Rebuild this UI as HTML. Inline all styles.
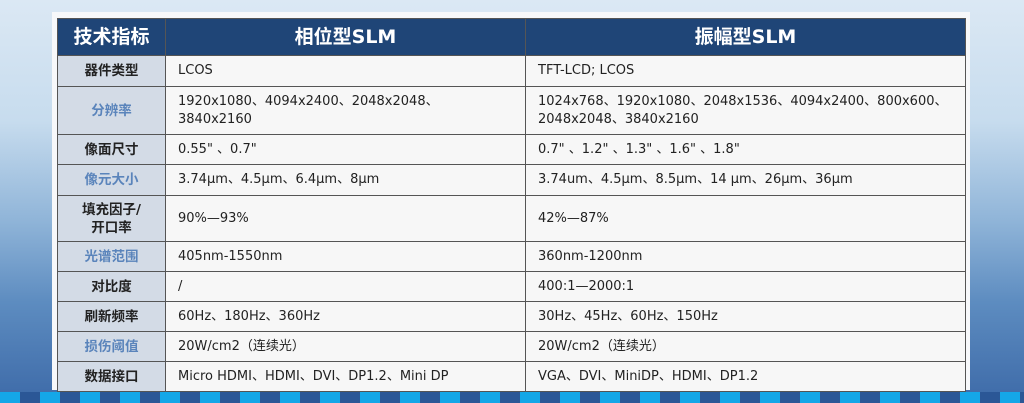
<!DOCTYPE html>
<html><head><meta charset="utf-8"><style>
body{margin:0;width:1024px;height:403px;overflow:hidden;position:relative;font-family:"Liberation Sans","Noto Sans CJK SC",sans-serif;
background:linear-gradient(180deg,#dbe8f4 0%,#c7dcee 30%,#8fb4d8 55%,#5d8cc0 75%,#3d6aa8 100%);}
.frame{position:absolute;left:52px;top:12px;width:918px;height:378px;background:#f7f8fa;}
table{position:absolute;left:57px;top:18px;border-collapse:collapse;table-layout:fixed;width:908px;}
td,th{border:1px solid #555;padding:0 0 0 12px;font-size:13px;color:#222;line-height:18px;background:#f7f7f7;font-family:"DejaVu Sans","Noto Sans CJK SC",sans-serif;}
th{background:#1f4577;color:#fff;font-size:19px;font-weight:bold;height:36px;text-align:center;padding:0;}
td.l{background:#d3dbe6;text-align:center;padding:0;font-weight:bold;font-size:13.5px;}
td.b{color:#5a84bb;}
.band{position:absolute;left:0;top:392px;width:1024px;height:11px;background:repeating-linear-gradient(90deg,#14a7e8 0 20px,#2b5796 20px 40px);}
</style></head><body>
<div class="frame"></div>
<table>
<col style="width:108px"><col style="width:360px"><col style="width:440px">
<tr><th>技术指标</th><th>相位型SLM</th><th>振幅型SLM</th></tr>
<tr style="height:31px"><td class="l">器件类型</td><td>LCOS</td><td>TFT-LCD; LCOS</td></tr>
<tr style="height:48px"><td class="l b">分辨率</td><td>1920x1080、4094x2400、2048x2048、<br>3840x2160</td><td>1024x768、1920x1080、2048x1536、4094x2400、800x600、<br>2048x2048、3840x2160</td></tr>
<tr style="height:30px"><td class="l">像面尺寸</td><td>0.55" 、0.7"</td><td>0.7" 、1.2" 、1.3" 、1.6" 、1.8"</td></tr>
<tr style="height:31px"><td class="l b">像元大小</td><td>3.74μm、4.5μm、6.4μm、8μm</td><td>3.74um、4.5μm、8.5μm、14 μm、26μm、36μm</td></tr>
<tr style="height:46px"><td class="l">填充因子/<br>开口率</td><td>90%—93%</td><td>42%—87%</td></tr>
<tr style="height:30px"><td class="l b">光谱范围</td><td>405nm-1550nm</td><td>360nm-1200nm</td></tr>
<tr style="height:30px"><td class="l">对比度</td><td>/</td><td>400:1—2000:1</td></tr>
<tr style="height:30px"><td class="l">刷新频率</td><td>60Hz、180Hz、360Hz</td><td>30Hz、45Hz、60Hz、150Hz</td></tr>
<tr style="height:30px"><td class="l b">损伤阈值</td><td>20W/cm2（连续光）</td><td>20W/cm2（连续光）</td></tr>
<tr style="height:30px"><td class="l">数据接口</td><td>Micro HDMI、HDMI、DVI、DP1.2、Mini DP</td><td>VGA、DVI、MiniDP、HDMI、DP1.2</td></tr>
</table>
<div class="band"></div>
</body></html>
